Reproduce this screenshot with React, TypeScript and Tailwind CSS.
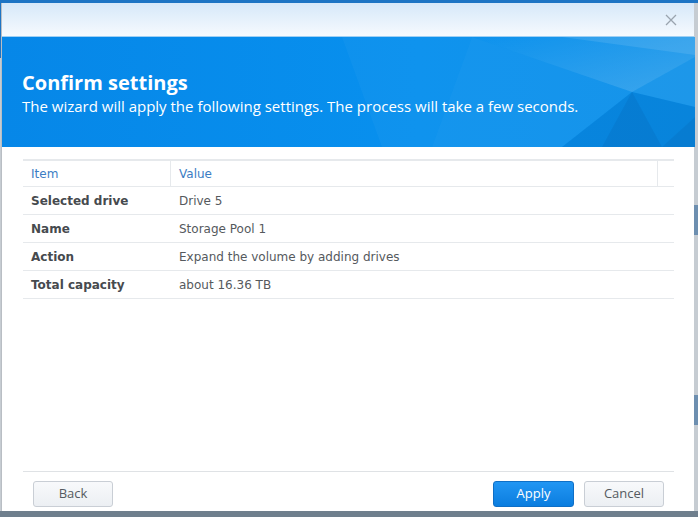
import React from 'react'

const rows = [
  { item: 'Selected drive', value: 'Drive 5' },
  { item: 'Name', value: 'Storage Pool 1' },
  { item: 'Action', value: 'Expand the volume by adding drives' },
  { item: 'Total capacity', value: 'about 16.36 TB' },
]

function BannerArt() {
  return (
    <svg className="absolute inset-0" width="693" height="110" viewBox="0 0 693 110" preserveAspectRatio="none">
      <defs>
        <linearGradient id="base" x1="0" y1="0" x2="1" y2="0">
          <stop offset="0" stopColor="#0687e8" />
          <stop offset="0.6" stopColor="#0890ee" />
          <stop offset="1" stopColor="#0a8fe8" />
        </linearGradient>
        <linearGradient id="lite" x1="0" y1="0" x2="1" y2="1">
          <stop offset="0" stopColor="#ffffff" stopOpacity="0.02" />
          <stop offset="1" stopColor="#ffffff" stopOpacity="0.2" />
        </linearGradient>
      </defs>
      <rect width="693" height="110" fill="url(#base)" />
      <polygon points="340,0 470,0 430,110 380,110" fill="#ffffff" fillOpacity="0.03" />
      <polygon points="470,0 693,0 693,20 630,55" fill="url(#lite)" />
      <polygon points="560,0 693,0 693,18" fill="#ffffff" fillOpacity="0.1" />
      <polygon points="630,55 693,20 693,70" fill="#ffffff" fillOpacity="0.08" />
      <polygon points="470,0 630,55 560,110 430,110" fill="#ffffff" fillOpacity="0.05" />
      <polygon points="630,55 693,70 693,110 560,110" fill="#003a80" fillOpacity="0.12" />
      <polygon points="630,55 660,110 600,110" fill="#003a80" fillOpacity="0.1" />
      <polygon points="660,110 693,80 693,110" fill="#003a80" fillOpacity="0.1" />
    </svg>
  )
}

export default function App() {
  return (
    <div className="w-[698px] h-[517px] bg-[#c6ccd2] overflow-hidden relative" style={{ fontFamily: '"DejaVu Sans", Verdana, sans-serif' }}>
      <div className="h-[3px] bg-[#1d74c4]" />
      <div className="absolute left-0 right-0 bottom-0 h-[6px] bg-[#6f7f8d]" />
      <div className="absolute left-0 top-[3px] w-[1px] h-[55px] bg-[#1d74c4]" />
      <div className="absolute right-0 top-[205px] w-[4px] h-[30px] bg-[#6d8fb0]" />
      <div className="absolute right-0 top-[395px] w-[4px] h-[30px] bg-[#6d8fb0]" />

      <div className="ml-[1px] w-[693px] h-[508px] bg-white border-l border-[#b9bec4] flex flex-col relative">
        {/* title bar */}
        <div className="h-[33px] bg-gradient-to-b from-[#d6e8f9] to-[#f6fafe] flex justify-end items-center pr-[17px]">
          <svg width="12" height="12" viewBox="0 0 12 12">
            <path d="M1 1 L11 11 M11 1 L1 11" stroke="#9aa4ae" strokeWidth="1.3" />
          </svg>
        </div>
        <div className="h-[1px] bg-[#9fd0f4]" />

        {/* banner */}
        <div className="h-[110px] relative flex flex-col justify-center pl-[20px] pt-[2px]">
          <BannerArt />
          <div className="relative text-white" style={{ fontFamily: '"Open Sans", sans-serif' }}>
            <div className="text-[20px] font-bold leading-[26px]">Confirm settings</div>
            <div className="text-[15px] leading-[20px]">The wizard will apply the following settings. The process will take a few seconds.</div>
          </div>
        </div>

        {/* table */}
        <div className="flex-1 pt-[12px] pl-[21px] pr-[20px] flex flex-col">
          <div className="border-t-2 border-[#e6e9ec]">
            <div className="flex h-[26px] items-center border-b border-[#e6e9ec] text-[12px] text-[#3b7dc4]">
              <div className="w-[148px] pl-[8px] h-full flex items-center border-r border-[#e6e9ec]">Item</div>
              <div className="flex-1 pl-[8px] h-full flex items-center border-r border-[#e6e9ec]">Value</div>
              <div className="w-[16px]" />
            </div>
            {rows.map((r) => (
              <div key={r.item} className="flex h-[28px] items-center border-b border-[#e6e9ec] text-[12px]">
                <div className="w-[148px] pl-[8px] font-bold text-[#464a4e]">{r.item}</div>
                <div className="flex-1 pl-[8px] text-[#55595d]">{r.value}</div>
              </div>
            ))}
          </div>
          <div className="flex-1" />
          <div className="h-[1px] bg-[#dfe2e5]" />
          <div className="h-[39px] flex items-start pt-[9px] pl-[10px] pr-[10px]" style={{ fontFamily: '"Open Sans", sans-serif' }}>
            <button className="w-[80px] h-[26px] rounded-[3px] border border-[#c9ced5] bg-gradient-to-b from-[#f8f9fb] to-[#eceff3] text-[13px] text-[#555a60]">Back</button>
            <div className="flex-1" />
            <button className="w-[81px] h-[26px] rounded-[3px] border border-[#0f6fc6] bg-gradient-to-b from-[#2196f3] to-[#0a7ddf] text-[13px] text-white">Apply</button>
            <button className="ml-[10px] w-[80px] h-[26px] rounded-[3px] border border-[#c9ced5] bg-gradient-to-b from-[#f8f9fb] to-[#eceff3] text-[13px] text-[#555a60]">Cancel</button>
          </div>
        </div>
      </div>
    </div>
  )
}
